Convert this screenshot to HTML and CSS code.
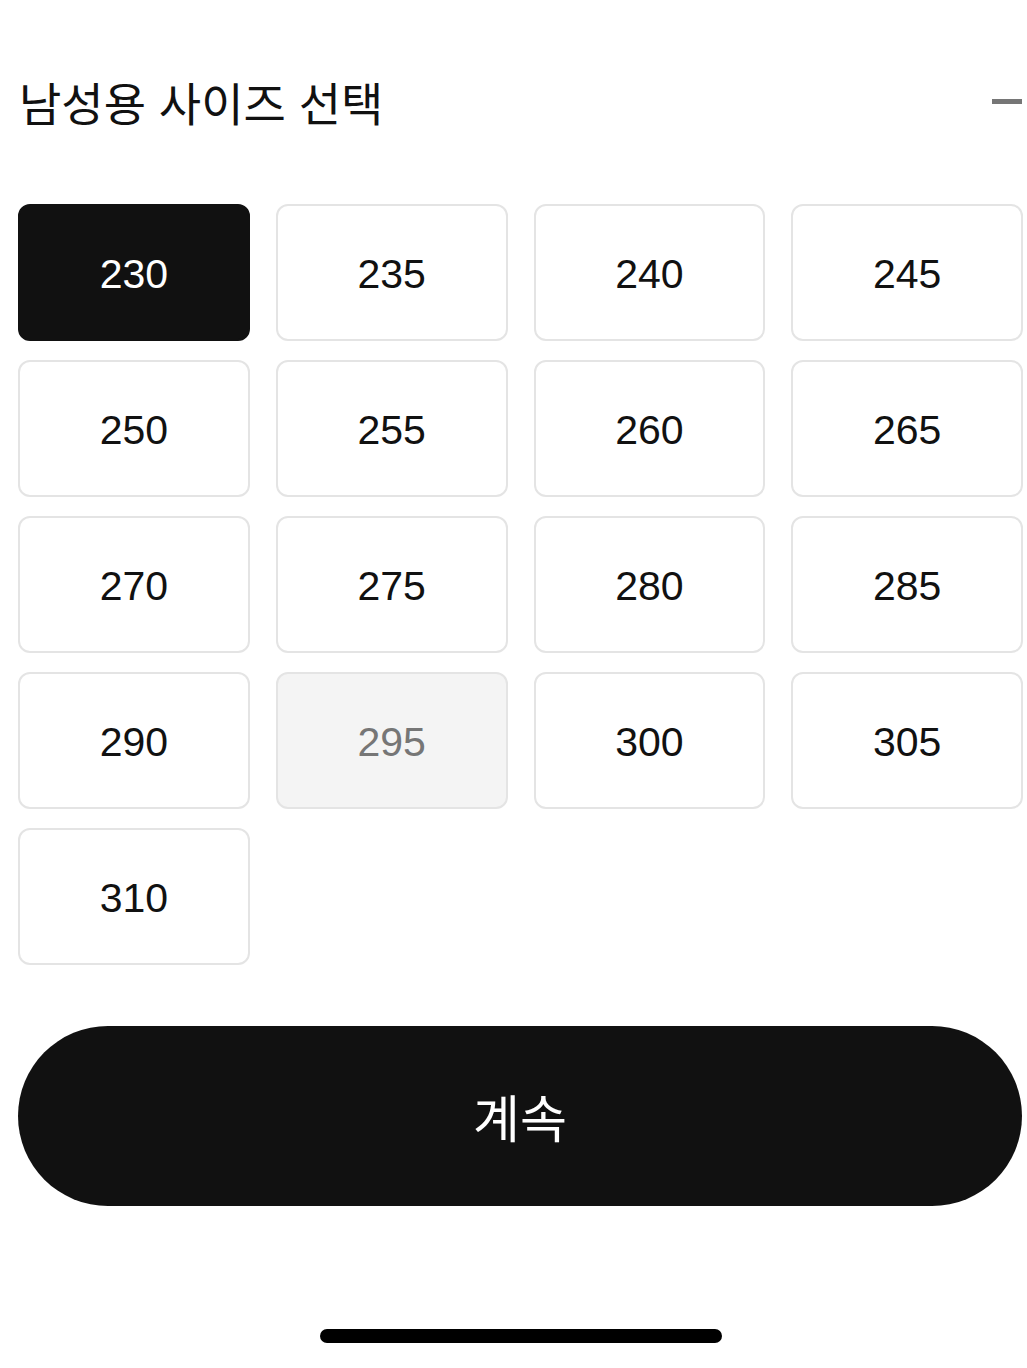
FILE: index.html
```html
<!DOCTYPE html>
<html lang="ko">
<head>
  <meta charset="UTF-8">
  <title>사이즈 선택</title>
  <link rel="stylesheet" href="styles.css">
</head>
<body>
  <div class="sheet">
    <div class="sheet-header">
      <h2 class="sheet-title">남성용 사이즈 선택</h2>
      <span class="collapse-icon"></span>
    </div>

    <div class="size-grid">
      <button class="size-option selected">230</button>
      <button class="size-option">235</button>
      <button class="size-option">240</button>
      <button class="size-option">245</button>
      <button class="size-option">250</button>
      <button class="size-option">255</button>
      <button class="size-option">260</button>
      <button class="size-option">265</button>
      <button class="size-option">270</button>
      <button class="size-option">275</button>
      <button class="size-option">280</button>
      <button class="size-option">285</button>
      <button class="size-option">290</button>
      <button class="size-option disabled">295</button>
      <button class="size-option">300</button>
      <button class="size-option">305</button>
      <button class="size-option">310</button>
    </div>

    <button class="continue-btn">계속</button>
  </div>
  <div class="home-indicator"></div>
</body>
</html>
```

FILE: styles.css
```css
body {
  margin: 0;
  background: #fff;
  color: #111;
  font-family: "Noto Sans CJK KR", "Liberation Sans", sans-serif;
  width: 1027px;
  height: 1368px;
  position: relative;
  overflow: hidden;
}
.sheet {
  width: 1005px;
  padding: 70px 0 0 18px;
}
.sheet-header {
  display: flex;
  align-items: center;
  justify-content: space-between;
  height: 62px;
}
.sheet-title {
  margin: 0;
  font-size: 46px;
  font-weight: 400;
  line-height: 1;
  letter-spacing: 0;
  padding-left: 1px;
}
.collapse-icon {
  width: 30px;
  height: 5px;
  background: #767676;
  margin-right: 1px;
}
.size-grid {
  display: grid;
  grid-template-columns: repeat(4, 1fr);
  column-gap: 26px;
  row-gap: 19px;
  margin-top: 72px;
}
.size-option {
  height: 137px;
  border: 2px solid #e4e4e4;
  border-radius: 12px;
  background: #fff;
  color: #111;
  font-family: "Liberation Sans", Arial, sans-serif;
  font-size: 41px;
  padding: 3px 0 0;
  cursor: pointer;
}
.size-option.selected {
  background: #111;
  border-color: #111;
  color: #fff;
}
.size-option.disabled {
  background: #f4f4f4;
  color: #767676;
}
.continue-btn {
  display: block;
  width: 1004px;
  height: 180px;
  margin-top: 61px;
  border: none;
  border-radius: 90px;
  background: #111;
  color: #fff;
  font-family: "Noto Sans CJK KR", sans-serif;
  font-size: 51px;
  padding: 0;
  cursor: pointer;
}
.home-indicator {
  position: absolute;
  left: 320px;
  top: 1329px;
  width: 402px;
  height: 14px;
  border-radius: 7px;
  background: #000;
}
```
